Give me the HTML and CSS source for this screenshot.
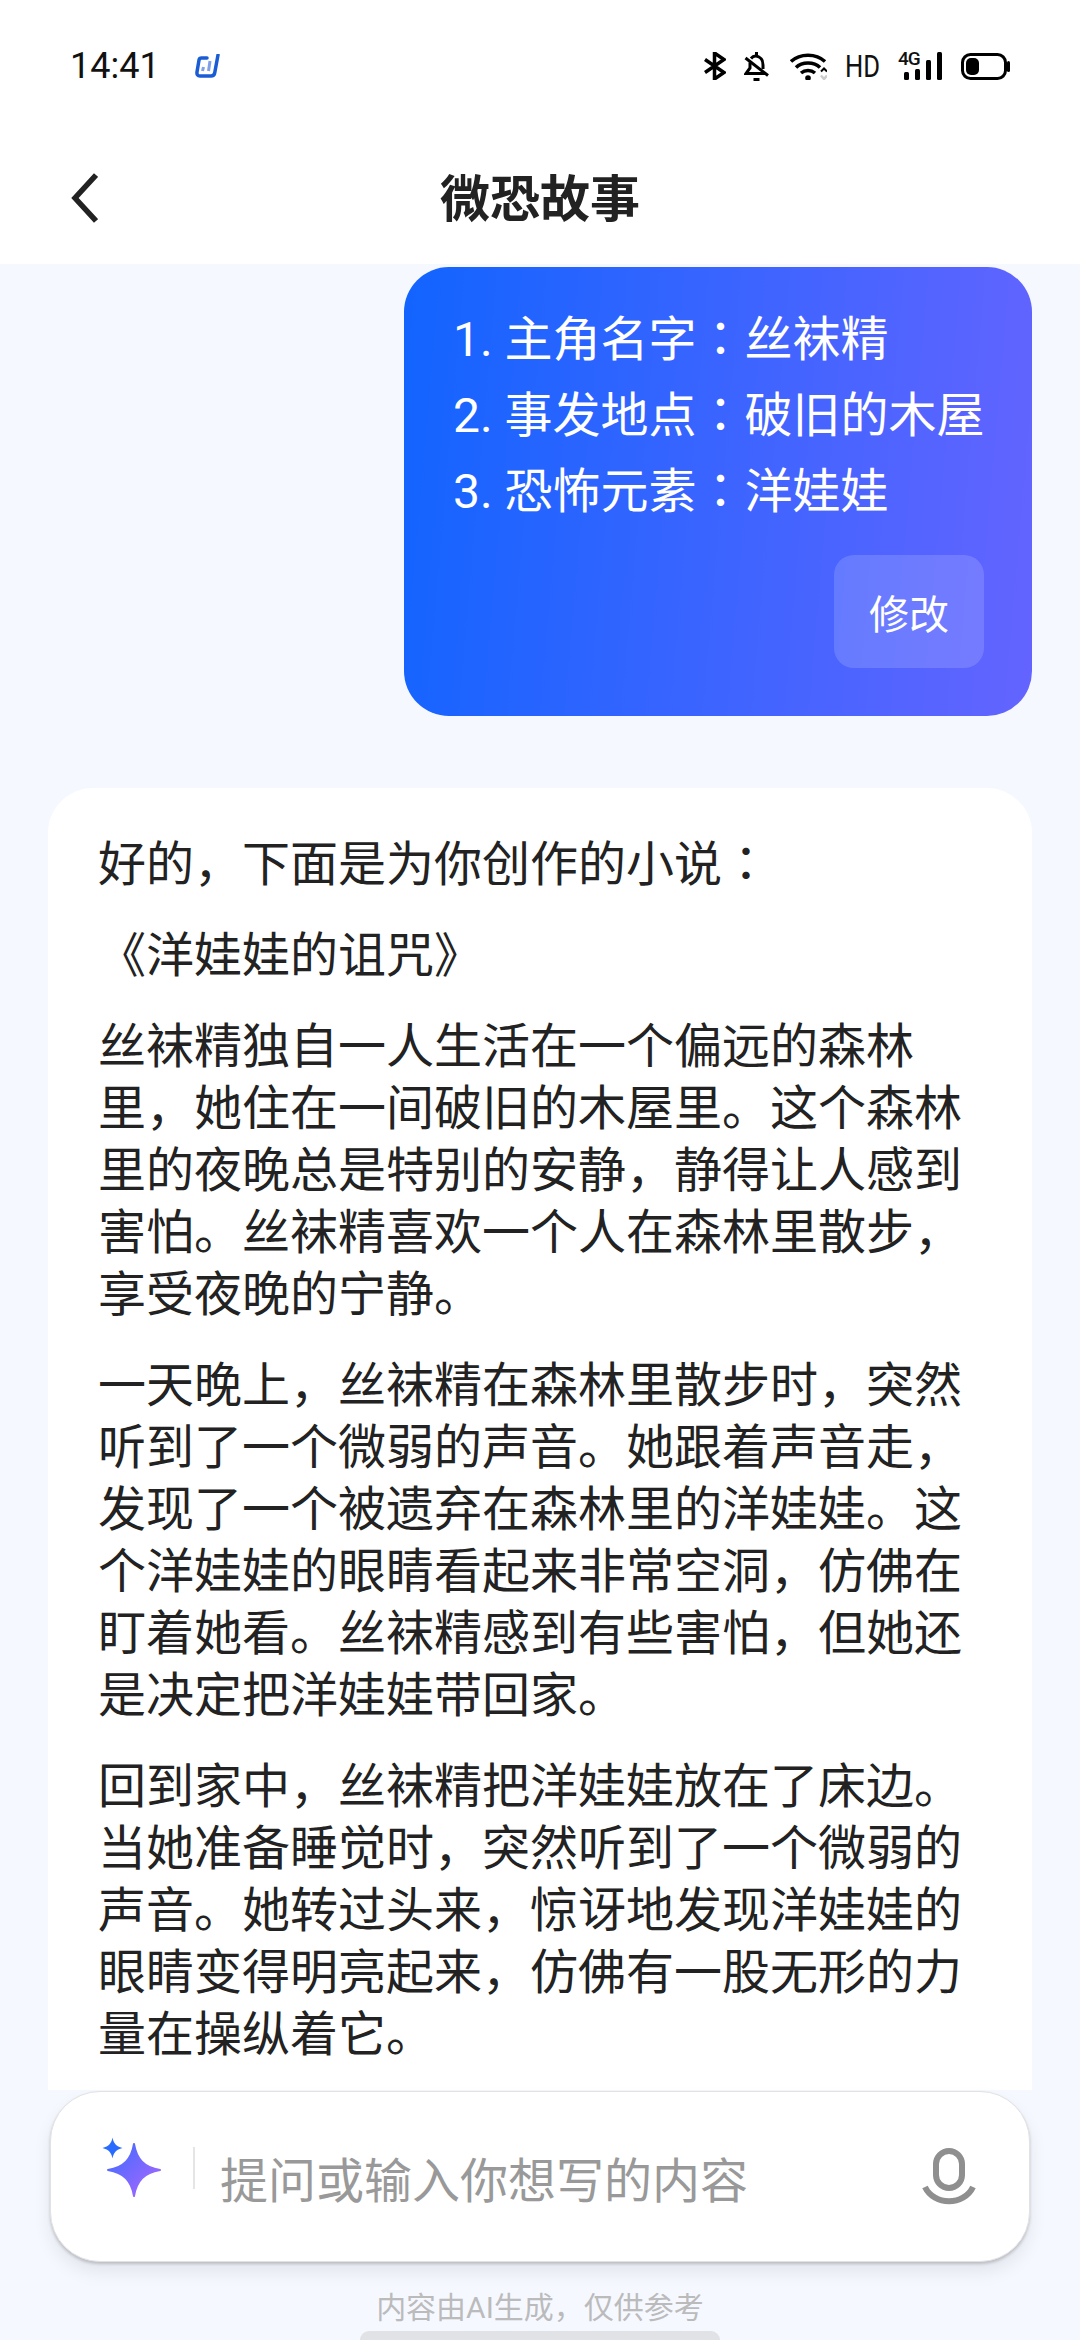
FILE: index.html
```html
<!DOCTYPE html>
<html lang="zh-CN">
<head>
    <meta charset="utf-8">
    <title>微恐故事</title>
    <link rel="stylesheet" href="styles.css">
</head>
<body>
    <div class="statusbar">
        <div class="status-left">
            <span class="time">14:41</span>
            <svg class="app-logo" viewBox="0 0 26 25" fill="none">
                <path d="M12 4H6.500Q4.500 4 4 6L2 18Q1.500 22 5 22H16Q19 22 19.700 19L23 1" stroke="#1a5cd6" stroke-width="3.500" stroke-linecap="round"/>
                <path d="M8.500 13L7.500 17M15 7L13.500 17" stroke="#7f9fe8" stroke-width="3"/>
            </svg>
        </div>
        <div class="status-right">
            <svg class="ic-bt" viewBox="0 0 22 28" fill="none" stroke="#000" stroke-width="3.500">
                <path d="M1 7.500L20 20.500L10.500 27V1L20 7.500L1 20.500"/>
            </svg>
            <svg class="ic-bell" viewBox="0 0 25 29" fill="none" stroke="#000" stroke-width="3">
                <path d="M7 6.500C9 4 12 3.500 15 5C18 6.500 19 9.500 19 13V17"/>
                <path d="M6 10.500V16L2 21.500H21"/>
                <path d="M1.500 6L24 23.500"/>
                <path d="M12.500 0V4M9.500 27.500H15.500"/>
            </svg>
            <svg class="ic-wifi" viewBox="0 0 37 27" fill="none">
                <path d="M1 8.500C10 0 26 0 35 8.500" stroke="#000" stroke-width="3.500"/>
                <path d="M6 14.500C12 8.500 24 8.500 30 14.500" stroke="#000" stroke-width="3.500"/>
                <path d="M11 20C15 16.500 21 16.500 25 20" stroke="#000" stroke-width="3.500"/>
                <circle cx="18" cy="25" r="2.800" fill="#000"/>
                <path d="M31 18.500L34 15.500L37 18.500" stroke="#000" stroke-width="2"/>
                <path d="M31 22.500L34 26L37 22.500" stroke="#ccc" stroke-width="2.500"/>
            </svg>
            <span class="hd">HD</span>
            <div class="signal">
                <span class="net">4G</span>
                <svg class="ic-bars" viewBox="0 0 38 28" fill="#000">
                    <rect x="0" y="20" width="5" height="8" rx="1.500"/>
                    <rect x="11" y="17" width="5" height="11" rx="1.500"/>
                    <rect x="22" y="8" width="5" height="20" rx="1.500"/>
                    <rect x="33" y="0" width="5" height="28" rx="1.500"/>
                </svg>
            </div>
            <svg class="ic-batt" viewBox="0 0 49 27" fill="none">
                <rect x="1.500" y="1.500" width="43" height="24" rx="8" stroke="#000" stroke-width="3"/>
                <rect x="5" y="5" width="13" height="17" rx="5" fill="#000"/>
                <path d="M47.500 9.500V17.500" stroke="#000" stroke-width="3" stroke-linecap="round"/>
            </svg>
        </div>
    </div>

    <div class="header">
        <svg class="back" viewBox="0 0 28 52" fill="none">
            <path d="M26 3L5 26L26 49" stroke="#222" stroke-width="5.500"/>
        </svg>
        <h1 class="title">微恐故事</h1>
    </div>

    <div class="chat">
        <div class="bubble">
            <p>1. 主角名字<span class="colon" lang="zh-TW">：</span>丝袜精</p>
            <p>2. 事发地点<span class="colon" lang="zh-TW">：</span>破旧的木屋</p>
            <p>3. 恐怖元素<span class="colon" lang="zh-TW">：</span>洋娃娃</p>
            <div class="edit-row">
                <button class="edit">修改</button>
            </div>
        </div>
        <div class="answer">
            <p>好的，下面是为你创作的小说<span class="colon" lang="zh-TW">：</span></p>
            <p>《洋娃娃的诅咒》</p>
            <p>丝袜精独自一人生活在一个偏远的森林里，她住在一间破旧的木屋里。这个森林里的夜晚总是特别的安静，静得让人感到害怕。丝袜精喜欢一个人在森林里散步，享受夜晚的宁静。</p>
            <p>一天晚上，丝袜精在森林里散步时，突然听到了一个微弱的声音。她跟着声音走，发现了一个被遗弃在森林里的洋娃娃。这个洋娃娃的眼睛看起来非常空洞，仿佛在盯着她看。丝袜精感到有些害怕，但她还是决定把洋娃娃带回家。</p>
            <p>回到家中，丝袜精把洋娃娃放在了床边。当她准备睡觉时，突然听到了一个微弱的声音。她转过头来，惊讶地发现洋娃娃的眼睛变得明亮起来，仿佛有一股无形的力量在操纵着它。</p>
        </div>
    </div>

    <div class="bottom">
        <div class="input-box">
            <svg class="stars" viewBox="0 0 60 80">
                <defs>
                    <linearGradient id="starfill" x1="0" y1="0" x2="1" y2="1">
                        <stop offset="0" stop-color="#3a6cff"/>
                        <stop offset="1" stop-color="#b066ff"/>
                    </linearGradient>
                </defs>
                <path d="M10.500 0.500C11.500 6 14 9.500 20.500 11C14 12.500 11.500 16 10.500 21.500C9.500 16 7 12.500 0.500 11C7 9.500 9.500 6 10.500 0.500Z" fill="#2a6bff"/>
                <path d="M32 7C34.500 22 42 30.500 58 33C42 35.500 34.500 44 32 59C29.500 44 22 35.500 6 33C22 30.500 29.500 22 32 7Z" fill="url(#starfill)" stroke="url(#starfill)" stroke-width="2" stroke-linejoin="round"/>
            </svg>
            <span class="divider"></span>
            <span class="placeholder">提问或输入你想写的内容</span>
            <svg class="mic" viewBox="0 0 54 58" fill="none" stroke="#8f8f8f" stroke-width="6">
                <rect x="14" y="3" width="26" height="37" rx="13"/>
                <path d="M3 39C12 58 42 58 51 39"/>
            </svg>
        </div>
        <p class="notice">内容由AI生成，仅供参考</p>
        <div class="homebar"></div>
    </div>
</body>
</html>
```

FILE: styles.css
```css
* {
    box-sizing: border-box;
}

body {
    margin: 0;
    width: 1080px;
    height: 2340px;
    display: flex;
    flex-direction: column;
    overflow: hidden;
    background-color: #f5f8ff;
    color: #222;
    font-family: Roboto, "Noto Sans CJK SC", sans-serif;
}

p {
    margin: 0;
}

.colon {
    font-family: "Noto Sans CJK TC", sans-serif;
    line-height: 0;
}

/* status bar */
.statusbar {
    height: 132px;
    flex-shrink: 0;
    display: flex;
    justify-content: space-between;
    align-items: center;
    padding: 0 70px;
    background-color: #fff;
    color: #111;
}

.status-left {
    display: flex;
    align-items: center;
    gap: 35px;
}

.time {
    font-size: 36px;
    font-weight: 400;
}

.app-logo {
    width: 26px;
    height: 25px;
}

.status-right {
    display: flex;
    align-items: center;
    gap: 18px;
}

.ic-bt {
    width: 22px;
    height: 28px;
}

.ic-bell {
    width: 25px;
    height: 29px;
}

.ic-wifi {
    width: 37px;
    height: 27px;
    margin-left: 3px;
}

.hd {
    width: 35px;
    font-size: 32px;
    line-height: 32px;
    transform: scaleX(0.8);
    transform-origin: left center;
    white-space: nowrap;
}

.signal {
    position: relative;
    width: 44px;
    height: 28px;
}

.net {
    position: absolute;
    left: 0;
    top: -3px;
    font-size: 19px;
    line-height: 19px;
    font-weight: 500;
    letter-spacing: -1px;
}

.ic-bars {
    width: 38px;
    height: 28px;
    margin-left: 6px;
    display: block;
}

.ic-batt {
    width: 49px;
    height: 27px;
    margin-left: 1px;
}

/* title */
.header {
    height: 132px;
    flex-shrink: 0;
    display: grid;
    grid-template-columns: 1fr auto 1fr;
    align-items: center;
    padding: 0 70px;
    background-color: #fff;
}

.back {
    width: 28px;
    height: 52px;
}

.title {
    margin: 0;
    padding-top: 4px;
    font-size: 50px;
    font-weight: 700;
    line-height: 60px;
    color: #222;
}

/* messages */
.chat {
    flex: 1;
    min-height: 0;
    display: flex;
    flex-direction: column;
    gap: 72px;
    padding: 3px 48px 0;
    overflow: hidden;
}

.bubble {
    align-self: flex-end;
    width: 628px;
    padding: 35px 48px 48px 49px;
    border-radius: 45px;
    background: linear-gradient(95deg, #1264ff, #6464ff);
    color: #fff;
    font-size: 48px;
    line-height: 76px;
    white-space: nowrap;
}

.edit-row {
    display: flex;
    justify-content: flex-end;
    margin-top: 25px;
}

.edit {
    width: 150px;
    height: 113px;
    padding: 0;
    border: none;
    border-radius: 20px;
    background-color: rgba(255, 255, 255, 0.15);
    color: #fff;
    font-family: inherit;
    font-size: 40px;
}

.answer {
    flex: 1;
    min-height: 0;
    padding: 46px 50px 0;
    border-radius: 45px 45px 0 0;
    background-color: #fff;
    font-size: 48px;
    line-height: 62px;
}

.answer p {
    margin-bottom: 29px;
}

/* input area */
.bottom {
    height: 250px;
    flex-shrink: 0;
    padding-top: 1px;
}

.input-box {
    height: 171px;
    margin: 0 50px;
    display: flex;
    align-items: center;
    padding: 0 53px 0 51px;
    border: 1.5px solid #e2e2e2;
    border-radius: 50px;
    background-color: #fff;
    box-shadow: 0 2px 3px rgba(0, 0, 0, 0.18), 0 10px 18px rgba(0, 0, 0, 0.08);
}

.stars {
    width: 60px;
    height: 80px;
    flex-shrink: 0;
}

.divider {
    align-self: flex-start;
    width: 2px;
    height: 42px;
    margin: 55px 25px 0 31px;
    background-color: #e5e5e5;
}

.placeholder {
    font-size: 48px;
    color: #999;
}

.mic {
    width: 54px;
    height: 58px;
    margin-left: auto;
}

.notice {
    margin-top: 26px;
    font-size: 30px;
    line-height: 40px;
    text-align: center;
    color: #bbb;
}

.homebar {
    width: 360px;
    height: 9px;
    margin: 3px auto 0;
    border-radius: 9px 9px 0 0;
    background-color: #e0e2e6;
}
```
